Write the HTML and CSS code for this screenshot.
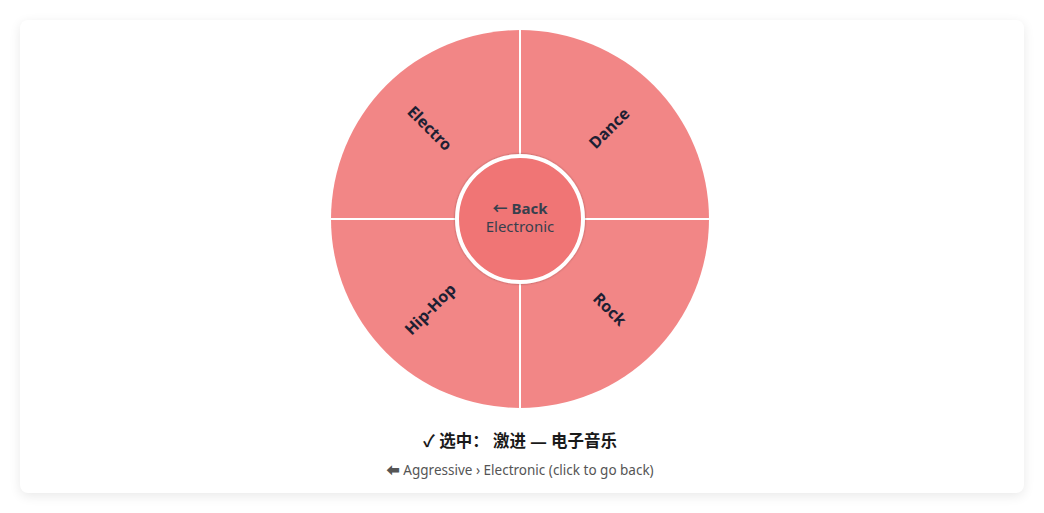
FILE: index.html
```html
<!DOCTYPE html>
<html lang="zh">
<head>
<meta charset="utf-8">
<link rel="stylesheet" href="styles.css">
</head>
<body>
<div class="card">
  <svg class="wheel" width="380" height="380" viewBox="0 0 380 380">
    <defs>
      <filter id="sh" x="-20%" y="-20%" width="140%" height="140%">
        <feDropShadow dx="0" dy="0" stdDeviation="1.2" flood-color="#000" flood-opacity="0.35"/>
      </filter>
    </defs>
    <g class="seg">
      <path d="M190,190 L1,190 A189,189 0 0 1 190,1 Z"/>
      <path d="M190,190 L190,1 A189,189 0 0 1 379,190 Z"/>
      <path d="M190,190 L379,190 A189,189 0 0 1 190,379 Z"/>
      <path d="M190,190 L190,379 A189,189 0 0 1 1,190 Z"/>
    </g>
    <g class="sep">
      <line x1="190" y1="0" x2="190" y2="380"/>
      <line x1="0" y1="190" x2="380" y2="190"/>
    </g>
    <text class="lab" transform="translate(100,99) rotate(45)">Electro</text>
    <text class="lab" transform="translate(279,99) rotate(-45)">Dance</text>
    <text class="lab" transform="translate(100,280) rotate(-45)">Hip-Hop</text>
    <text class="lab" transform="translate(280,280) rotate(45)">Rock</text>
    <circle class="hub" cx="190" cy="190" r="63" filter="url(#sh)"/>
    <text class="back" x="190" y="179">← Back</text>
    <text class="cur" x="190" y="197">Electronic</text>
  </svg>
  <div class="title">✓ 选中： 激进 — 电子音乐</div>
  <div class="sub">⬅ Aggressive › Electronic (click to go back)</div>
</div>
</body>
</html>
```
FILE: styles.css
```css
html, body {
  margin: 0;
  padding: 0;
  background: #ffffff;
}
body {
  padding: 20px;
  font-family: "Noto Sans", "Noto Sans CJK SC", sans-serif;
}
.card {
  width: 1004px;
  height: 473px;
  box-sizing: border-box;
  background: #fff;
  border-radius: 8px;
  box-shadow: 0 3px 12px rgba(0,0,0,0.09);
  display: flex;
  flex-direction: column;
  align-items: center;
  padding-top: 9px;
  padding-right: 4px;
}
.wheel {
  display: block;
}
.seg path {
  fill: #f28686;
}
.sep line {
  stroke: #ffffff;
  stroke-width: 2;
}
.lab {
  font-family: "Noto Sans", sans-serif;
  font-weight: 700;
  font-size: 16px;
  fill: #1e1f33;
  text-anchor: middle;
  dominant-baseline: central;
}
.hub {
  fill: #f07474;
  stroke: #ffffff;
  stroke-width: 4;
}
.back {
  font-weight: 700;
  font-size: 15px;
  fill: #37404d;
  text-anchor: middle;
  dominant-baseline: central;
}
.cur {
  font-size: 15px;
  fill: #37404d;
  text-anchor: middle;
  dominant-baseline: central;
}
.title {
  margin-top: 21px;
  font-size: 16.5px;
  font-weight: 700;
  line-height: 22px;
  color: #1a1a1a;
}
.sub {
  margin-top: 9px;
  font-size: 13.5px;
  line-height: 18px;
  color: #555;
}
```
